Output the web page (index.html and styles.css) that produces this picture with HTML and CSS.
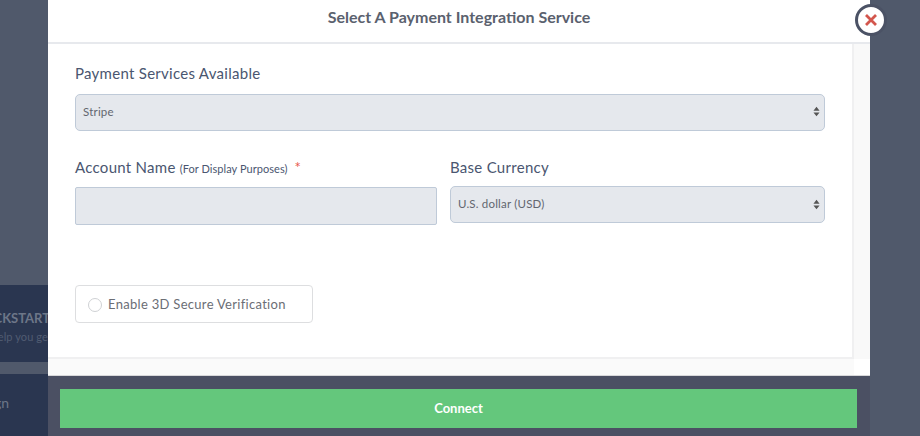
FILE: index.html
```html
<!DOCTYPE html>
<html lang="en">
<head>
<meta charset="utf-8">
<title>Select A Payment Integration Service</title>
<link rel="stylesheet" href="styles.css">
</head>
<body>
<div class="page">
  <aside class="backdrop-left">
    <div class="bg-card">
      <div class="bg-line bg-title"><span>CKSTART</span></div>
      <div class="bg-line bg-sub"><span>elp you ge</span></div>
    </div>
    <div class="bg-nav">
      <div class="bg-line bg-link"><span>gn</span></div>
    </div>
  </aside>
  <main class="modal">
    <header class="modal-head"><h1>Select A Payment Integration Service</h1></header>
    <div class="modal-scroll">
      <form class="panel">
        <div class="field field-service">
          <label class="label">Payment Services Available</label>
          <div class="select">
            <span>Stripe</span>
            <svg class="updown" width="7" height="11" viewBox="0 0 8 12"><path d="M4 0.5 7.5 5H.5zM4 11.5.5 7h7z"/></svg>
          </div>
        </div>
        <div class="row">
          <div class="field field-name">
            <label class="label">Account Name <small>(For Display Purposes)</small> <em>*</em></label>
            <div class="input"></div>
          </div>
          <div class="field field-currency">
            <label class="label">Base Currency</label>
            <div class="select select-currency">
              <span>U.S. dollar (USD)</span>
              <svg class="updown" width="7" height="11" viewBox="0 0 8 12"><path d="M4 0.5 7.5 5H.5zM4 11.5.5 7h7z"/></svg>
            </div>
          </div>
        </div>
        <div class="check"><i class="radio"></i><span>Enable 3D Secure Verification</span></div>
      </form>
      <div class="track"></div>
    </div>
    <div class="modal-end"><div class="modal-corner"></div></div>
    <footer class="modal-foot"><button class="connect" type="button">Connect</button></footer>
    <button class="close" type="button" aria-label="Close">
      <svg width="14" height="14" viewBox="0 0 14 14"><path d="M2 2 12 12M12 2 2 12"/></svg>
    </button>
  </main>
  <aside class="backdrop-right"></aside>
</div>
</body>
</html>
```
FILE: styles.css
```css
* { box-sizing: border-box; }
html, body { margin: 0; height: 100%; }
body {
  width: 920px;
  height: 436px;
  overflow: hidden;
  background: #50596b;
  font-family: Lato, "Liberation Sans", sans-serif;
}
.page { display: flex; width: 920px; height: 436px; }

.backdrop-left { width: 48px; flex: none; padding-top: 285px; overflow: hidden; }
.backdrop-right { flex: 1; }
.bg-card { height: 77px; background: #2a3650; padding-top: 24px; }
.bg-nav { height: 62px; margin-top: 12px; background: #2a3650; padding-top: 20px; }
.bg-line { display: flex; justify-content: flex-end; white-space: nowrap; }
.bg-title { font-size: 13px; line-height: 18px; font-weight: 700; color: #6d7688; margin-right: -2px; }
.bg-sub { font-size: 11px; line-height: 16px; margin-top: 2px; color: #515c72; letter-spacing: .1px; }
.bg-link { font-size: 14px; line-height: 18px; color: #6d7688; margin-right: 39px; }

.modal {
  position: relative;
  width: 822px;
  flex: none;
  display: flex;
  flex-direction: column;
  background: #fff;
}
.modal-head {
  height: 44px;
  flex: none;
  border-bottom: 2px solid #e7e9ed;
  display: flex;
  justify-content: center;
  padding-top: 7px;
}
.modal-head h1 {
  margin: 0;
  font-size: 16px;
  line-height: 20px;
  font-weight: 700;
  color: #5a616e;
}
.modal-scroll { display: flex; height: 315px; flex: none; }
.panel {
  width: 806px;
  flex: none;
  border-right: 2px solid #f0f0f1;
  border-bottom: 2px solid #f0f0f1;
  padding: 20px 27px 0 27px;
}
.track { flex: 1; background: #f9f9f9; }
.modal-end {
  height: 17px;
  flex: none;
  display: flex;
  justify-content: flex-end;
  background: #fafafa;
  border-bottom: 1px solid #d8d8da;
}
.modal-corner { width: 16px; background: #fff; }
.modal-foot {
  flex: 1;
  background: #4b5063;
  padding: 13px 13px 8px 12px;
}
.connect {
  display: block;
  width: 797px;
  height: 39px;
  border: 0;
  padding: 0 0 2px;
  background: #64c77c;
  color: #fff;
  font: 700 13px Lato, "Liberation Sans", sans-serif;
}
.close {
  position: absolute;
  left: 807px;
  top: 4px;
  width: 32px;
  height: 32px;
  padding: 0;
  border: 3px solid #4b5265;
  border-radius: 50%;
  background: #fff;
  display: flex;
  align-items: center;
  justify-content: center;
}
.close path { fill: none; stroke: #d3564d; stroke-width: 2.8; }

.label {
  display: block;
  font-size: 15px;
  line-height: 18px;
  color: #4a5670;
  letter-spacing: .28px;
}
.label small { font-size: 11px; letter-spacing: .05px; }
.label em { font-style: normal; color: #e8574c; margin-left: 3px; }
.select, .input {
  position: relative;
  background: #e5e8ed;
  border: 1px solid #bfcad8;
  border-radius: 5px;
}
.select {
  height: 37px;
  margin-top: 12px;
  display: flex;
  align-items: center;
  padding: 0 7px 3px;
  font-size: 11.5px;
  color: #62666f;
  letter-spacing: .2px;
}
.updown { position: absolute; right: 4px; top: 11px; }
.updown path { fill: #555; }
.row { display: flex; gap: 13px; margin-top: 27px; }
.field-name { width: 362px; }
.field-currency { width: 375px; }
.input { height: 38px; margin-top: 9px; border-radius: 2px; }
.select-currency { margin-top: 10px; padding-bottom: 2px; }
.select-currency .updown { top: 12px; }
.check {
  width: 238px;
  height: 38px;
  margin-top: 60px;
  border: 1px solid #dddee0;
  border-radius: 4px;
  display: flex;
  align-items: center;
  padding-left: 12px;
  font-size: 13px;
  color: #6b6e75;
  letter-spacing: .3px;
}
.radio {
  width: 14px;
  height: 14px;
  margin: 2px 6px 0 0;
  border: 1px solid #cfd1d4;
  border-radius: 50%;
  flex: none;
}
```
